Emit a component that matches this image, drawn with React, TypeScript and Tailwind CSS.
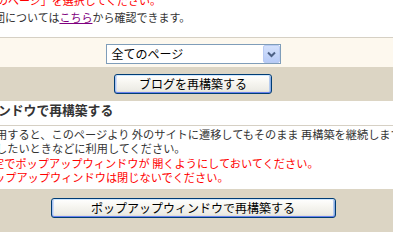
const XpButton = ({ label, width }: { label: string; width: string }) => (
  <button
    type="button"
    className={`${width} h-[20px] rounded-[3px] border border-[#003c74] bg-[linear-gradient(to_bottom,#ffffff_0%,#f7f6f1_40%,#ecebe5_85%,#d8d4c8_100%)] shadow-[inset_0_1px_0_#cee7ff,inset_0_-1px_0_#6982ee,inset_1px_0_0_#a9c3f2,inset_-1px_0_0_#89ade4,inset_2px_0_0_#cfdcf6,inset_-2px_0_0_#b5cbee] text-[12px] leading-[18px] text-black`}
  >
    {label}
  </button>
);

const App = () => {
  return (
    <div className="w-[393px] h-[232px] overflow-hidden bg-white font-['Noto_Sans_CJK_JP',sans-serif] text-[#333333]">
      {/* intro text */}
      <div className="-mt-[8px] pb-[11px] border-b border-[#d6d0c4] text-[11px] leading-[17px] whitespace-nowrap">
        <p className="-ml-[3px] text-[#ff0000]">のページ」を選択してください。</p>
        <p className="-ml-[6px]">
          団については
          <a href="#" className="text-[#800080] underline">
            こちら
          </a>
          から確認できます。
        </p>
      </div>

      {/* page select */}
      <div className="bg-[#fdf8ee] pt-[6px] pb-[3px] pr-[7px] flex justify-center">
        <div className="w-[175px] h-[20px] border border-[#7f9db9] bg-white flex items-stretch">
          <span className="flex-1 pl-[5px] text-[12px] leading-[18px] text-black">全てのページ</span>
          <span className="w-[17px] rounded-[2px] border border-[#b9cbf3] bg-[linear-gradient(to_bottom,#d4e1fc,#b7cbf7)] flex items-center justify-center">
            <svg width="9" height="7" viewBox="0 0 9 7">
              <path d="M1 1.5 L4.5 5 L8 1.5" fill="none" stroke="#4d6185" strokeWidth="2" />
            </svg>
          </span>
        </div>
      </div>

      <div className="bg-[#dcd5c4] pt-[7px] pb-[7px] pr-[7px] flex justify-center">
        <XpButton label="ブログを再構築する" width="w-[158px]" />
      </div>

      {/* popup rebuild */}
      <h3 className="pt-[1px] pb-[7px] border-b border-[#d6d0c4] -ml-[2px] text-[12.8px] leading-[16px] font-bold whitespace-nowrap">
        ンドウで再構築する
      </h3>
      <div className="pt-[1px] pb-[5px] text-[11.2px] leading-[14.3px] whitespace-nowrap">
        <p className="-ml-[4px]">用すると、このページより 外のサイトに遷移してもそのまま 再構築を継続します。</p>
        <p className="-ml-[4px]">したいときなどに利用してください。</p>
        <p className="-ml-[7px] text-[#ff0000]">定でポップアップウィンドウが 開くようにしておいてください。</p>
        <p className="-ml-[6px] text-[#ff0000]">ップアップウィンドウは閉じないでください。</p>
      </div>

      <div className="bg-[#dcd5c4] pt-[9px] pb-[20px] pr-[7px] flex justify-center">
        <XpButton label="ポップアップウィンドウで再構築する" width="w-[285px]" />
      </div>
    </div>
  );
};

export default App;
